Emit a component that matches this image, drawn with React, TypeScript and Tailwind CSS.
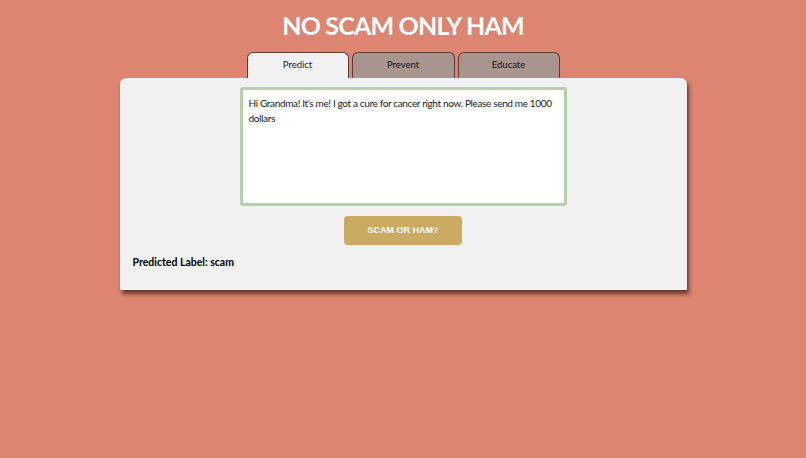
export default function App() {
  return (
    <div className="min-h-screen w-full bg-[#dd8570] font-['Lato','Noto_Sans',sans-serif]">
      <h1 className="pt-[10px] text-center text-[25px] font-bold leading-[30px] tracking-[-0.8px] text-white">
        NO SCAM ONLY HAM
      </h1>
      <div className="mt-[12px] flex justify-center gap-[3px]">
        <div className="flex h-[26px] w-[102px] items-center justify-center rounded-t-[6px] border border-b-0 border-[#5e3b33] bg-[#f1f1f1] text-[9.5px] text-[#222]">
          Predict
        </div>
        <div className="flex h-[26px] w-[103px] items-center justify-center rounded-t-[6px] border border-b-0 border-[#5e3b33] bg-[#a8958f] text-[9.5px] text-[#111]">
          Prevent
        </div>
        <div className="flex h-[26px] w-[102px] items-center justify-center rounded-t-[6px] border border-b-0 border-[#5e3b33] bg-[#a8958f] text-[9.5px] text-[#111]">
          Educate
        </div>
      </div>
      <div className="mx-auto h-[212px] w-[567px] rounded-t-[6px] bg-[#f1f1f1] px-[13px] pt-[9px] shadow-[2px_4px_4px_rgba(60,30,25,0.75)]">
        <div className="mx-auto h-[119px] w-[327px] rounded-[3px] border-[3px] border-[#b6d0a8] bg-white px-[6px] pt-[6px] text-[10px] leading-[15px] tracking-[-0.35px] text-[#222]">
          Hi Grandma! It's me! I got a cure for cancer right now. Please send me 1000 dollars
        </div>
        <div className="mt-[10px] flex justify-center">
          <button className="h-[29px] w-[118px] rounded-[4px] bg-[#cbaa62] font-['Liberation_Sans',sans-serif] text-[9px] font-bold text-white">
            SCAM OR HAM?
          </button>
        </div>
        <p className="mt-[10px] text-[10.5px] font-bold text-black">Predicted Label: scam</p>
      </div>
    </div>
  );
}
